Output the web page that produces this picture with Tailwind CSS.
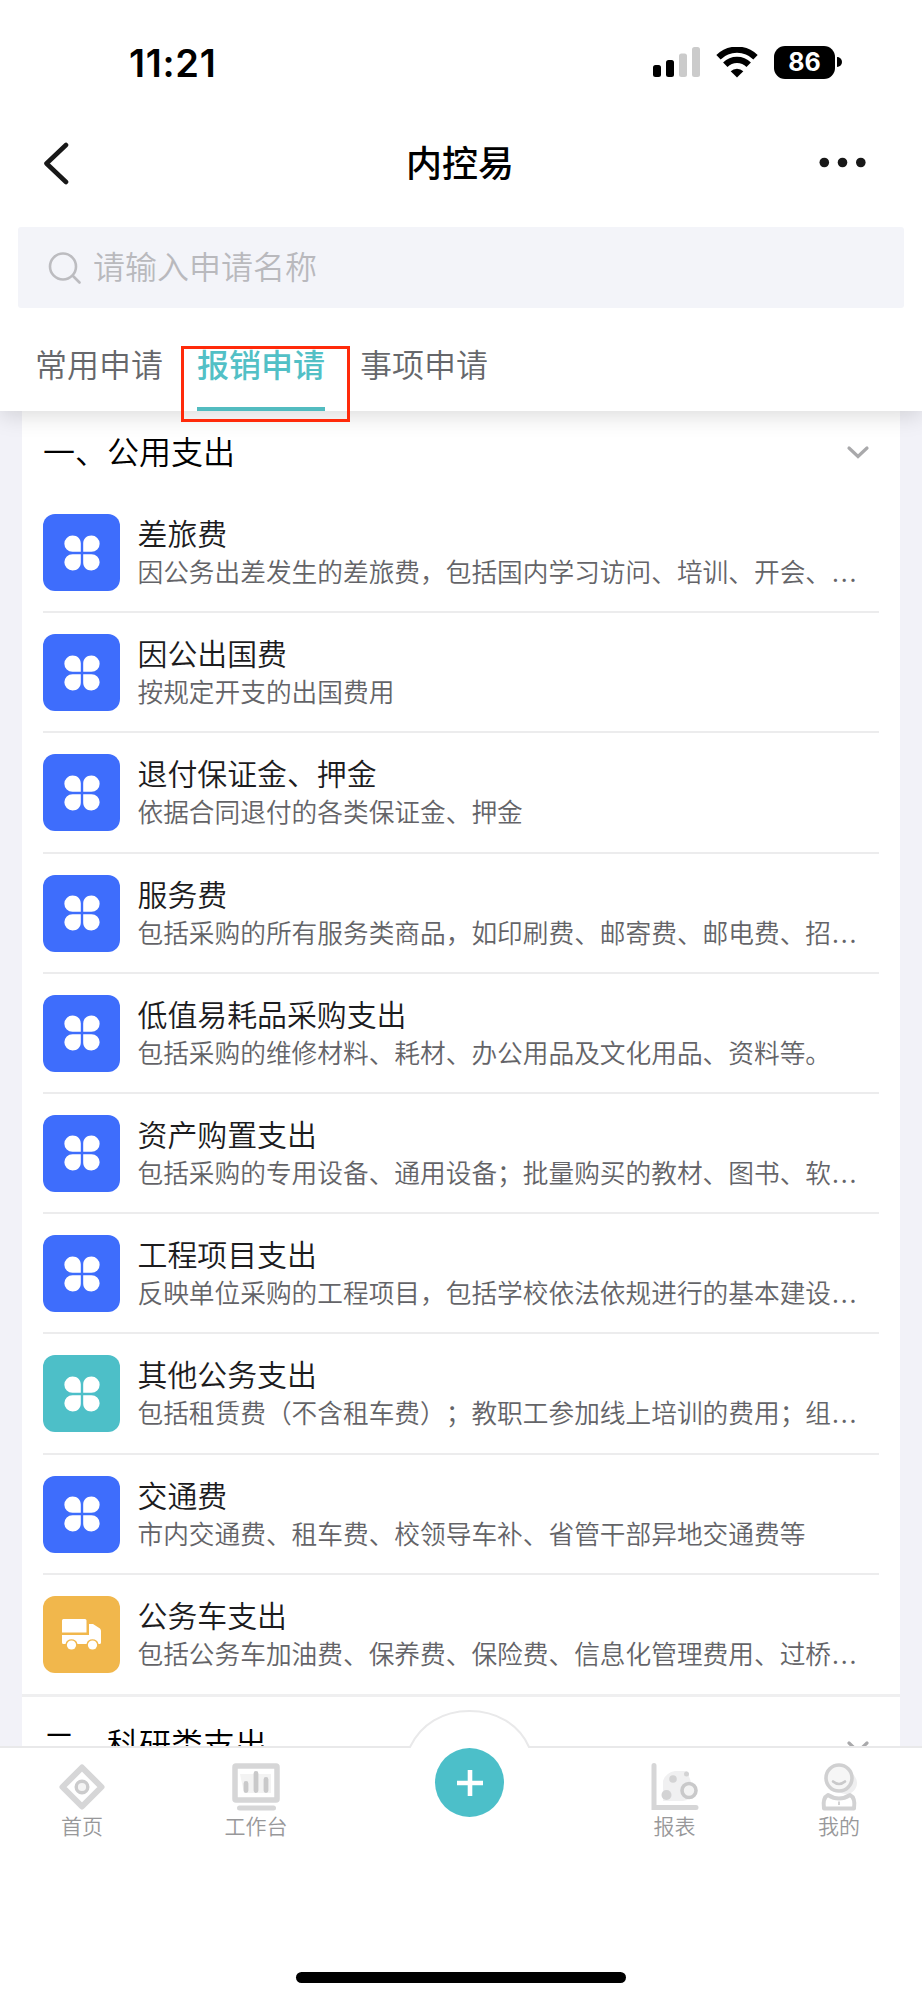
<!DOCTYPE html>
<html lang="zh-CN">
<head>
<meta charset="utf-8">
<title>内控易</title>
<script src="https://cdn.jsdelivr.net/npm/@tailwindcss/browser@4"></script>
</head>
<body class="bg-white">
<svg class="hidden">
  <symbol id="clover" viewBox="0 0 36 36">
    <path fill="#fff" d="M8.500 0.500C13.500 0.500 16.800 4 16.800 8.500V16.800H8.500A8.150 8.150 0 0 1 8.500 0.500ZM27.500 0.500A8.150 8.150 0 0 1 27.500 16.800H19.200V8.500C19.200 4 22.500 0.500 27.500 0.500ZM8.500 19.200H16.800V27.500C16.800 32 13.500 35.500 8.500 35.500A8.150 8.150 0 0 1 8.500 19.200ZM19.200 19.200H27.500A8.150 8.150 0 0 1 27.500 35.500C22.500 35.500 19.200 32 19.200 27.500Z"/>
  </symbol>
</svg>
<div class="flex h-[2000px] w-[922px] flex-col overflow-hidden bg-white font-['Noto_Sans_CJK_SC',sans-serif] font-[350] [text-spacing-trim:space-all]">
  <!-- status bar -->
  <div class="flex h-[124px] shrink-0 items-center justify-between pr-[80px] pl-[129px]">
    <span class="pt-[2px] font-['Inter',sans-serif] text-[38px] leading-none font-semibold tracking-[0.7px]">11:21</span>
    <div class="flex items-center">
      <svg class="h-[30px] w-[47px]" viewBox="0 0 47 30"><rect x="0" y="18" width="8" height="12" rx="2.500"/><rect x="13" y="13" width="8" height="17" rx="2.500"/><rect x="26" y="6.500" width="8" height="23.500" rx="2.500" fill="#cbcbcb"/><rect x="39" y="0" width="8" height="30" rx="2.500" fill="#cbcbcb"/></svg>
      <svg class="ml-[16px] h-[31px] w-[42px]" viewBox="0 0 42 31"><g fill="none" stroke="#000" stroke-width="6.200"><path d="M2.500 10.200A26.500 26.500 0 0 1 39.500 10.200"/><path d="M9.300 17.800A16.500 16.500 0 0 1 32.700 17.800"/></g><path d="M21 30.500L14.700 24.200A9 9 0 0 1 27.300 24.200Z"/></svg>
      <div class="ml-[16px] flex h-[33px] w-[61px] items-center justify-center rounded-[11px] bg-black font-['Inter',sans-serif] text-[25px] leading-none font-bold text-white">86</div>
      <svg class="ml-[2px] h-[10px] w-[5px]" viewBox="0 0 5 10"><path d="M0 0A5 5 0 0 1 0 10Z"/></svg>
    </div>
  </div>
  <!-- title bar -->
  <div class="flex h-[103px] shrink-0 items-start justify-between pr-[56px] pl-[43px]">
    <svg class="mt-[18px] h-[43px] w-[27px]" viewBox="0 0 27 43"><path d="M23 3L3.500 21.500L23 40" fill="none" stroke="#181818" stroke-width="4.600" stroke-linecap="round" stroke-linejoin="round"/></svg>
    <h1 class="mt-[14px] ml-[31px] text-[36px] leading-[46px] font-medium text-black">内控易</h1>
    <svg class="mt-[33px] h-[11px] w-[47px]" viewBox="0 0 47 11" fill="#181818"><circle cx="5.300" cy="5.500" r="4.800"/><circle cx="23.500" cy="5.500" r="4.800"/><circle cx="41.800" cy="5.500" r="4.800"/></svg>
  </div>
  <!-- search -->
  <div class="mx-[18px] flex h-[81px] shrink-0 items-center rounded-[3px] bg-[#f3f4f9] pl-[30px]">
    <svg class="h-[32px] w-[34px]" viewBox="0 0 34 32" fill="none" stroke="#bcbcc0" stroke-width="2.600" stroke-linecap="round"><circle cx="15" cy="14.500" r="13"/><path d="M25 24L31.500 30.500"/></svg>
    <span class="ml-[11px] pb-[5px] text-[32px] leading-[40px] text-[#b9b9bd]">请输入申请名称</span>
  </div>
  <!-- tabs -->
  <div class="relative z-10 flex h-[103px] shrink-0 gap-[34px] bg-white pl-[35px] text-[32px] leading-[40px] text-[#66676b] shadow-[0_4px_22px_rgba(0,0,0,0.15)] [clip-path:inset(0_0_-40px_0)]">
    <div class="pt-[35px]">常用申请</div>
    <div class="relative border-b-4 border-[#52bcc0] pt-[35px] font-medium text-[#52c0c6]">报销申请
      <div class="absolute top-[38px] -left-[16px] h-[76px] w-[169px] border-[3px] border-[#ff2a0a]"></div>
    </div>
    <div class="pt-[35px] pl-[1px]">事项申请</div>
  </div>
  <!-- list -->
  <div class="h-[1335px] shrink-0 overflow-hidden bg-[#f2f2f8] pr-[22px] pl-[22px]">
    <div class="h-[1286px] border-b-[3px] border-[#efeff0] bg-white px-[21px]">
      <div class="flex h-[82px] items-center justify-between pr-[9px]">
        <h2 class="pb-[5px] text-[32px] leading-[40px] text-black">一、公用支出</h2>
        <svg class="h-[14px] w-[24px]" viewBox="0 0 24 14"><path d="M3 3L12 11.500L21 3" fill="none" stroke="#a9a9ab" stroke-width="3.200" stroke-linecap="round"/></svg>
      </div>
      <div id="rows"></div>
    </div>
    <div class="flex h-[92px] items-center justify-between bg-white pr-[30px] pl-[21px]">
      <h2 class="pb-[3px] text-[32px] leading-[40px] text-black">二、科研类支出</h2>
      <svg class="mt-[8px] h-[14px] w-[24px]" viewBox="0 0 24 14"><path d="M3 3L12 11.500L21 3" fill="none" stroke="#a9a9ab" stroke-width="3.200" stroke-linecap="round"/></svg>
    </div>
  </div>
  <!-- tab bar -->
  <div class="relative h-[254px] shrink-0 border-t-2 border-[#e9e9ea] bg-white text-[21px] leading-[26px] text-[#98989a]">
    <svg class="absolute -top-[39px] left-[406px] h-[42px] w-[128px]" viewBox="0 0 128 42"><path d="M0 38H4C15 15 37 2 63.500 2S113 15 123 38H128V42H0Z" fill="#fff"/><path d="M0 38H4C15 15 37 2 63.500 2S113 15 123 38H128" fill="none" stroke="#e9e9ea" stroke-width="2"/></svg>
    <div class="relative flex pt-[15px]">
      <div class="flex w-[164px] flex-col items-center">
        <svg class="h-[48px] w-[48px]" viewBox="0 0 48 48" fill="none" stroke="#d6d6d7"><path d="M24 4.500L43.500 24L24 43.500L4.500 24Z" stroke-width="6" stroke-linejoin="round"/><circle cx="24" cy="24" r="5.800" stroke="#cbcbcc" stroke-width="3.400" fill="#f4f4f4"/></svg>
        <span class="mt-px">首页</span>
      </div>
      <div class="flex w-[184px] flex-col items-center">
        <svg class="h-[48px] w-[48px]" viewBox="0 0 48 48"><rect x="3" y="3" width="42" height="34" rx="1" fill="#fff" stroke="#d6d6d7" stroke-width="5.500"/><path d="M8 11H39V30H12Z" fill="#f3f3f3"/><g stroke="#c9c9ca" stroke-width="4.800" stroke-linecap="round"><path d="M14 20.500V27.500M24 10.500V27.500M34 16.500V27.500"/></g><rect x="5" y="42.500" width="39" height="5" rx="2.500" fill="#d6d6d7"/></svg>
        <span class="mt-px">工作台</span>
      </div>
      <div class="flex w-[243px] justify-center">
        <div class="-mt-[15px] flex h-[69px] w-[69px] items-center justify-center rounded-full bg-[#4cbfc9]">
          <svg class="h-[26px] w-[26px]" viewBox="0 0 26 26"><path d="M13 0V26M0 13H26" stroke="#fff" stroke-width="4.600"/></svg>
        </div>
      </div>
      <div class="flex w-[167px] flex-col items-center">
        <svg class="h-[48px] w-[48px]" viewBox="0 0 48 48"><path d="M3 2.500V44.500H45" fill="none" stroke="#d6d6d7" stroke-width="5" stroke-linecap="round"/><path d="M12 38V18A15 15 0 0 1 24 8H36L43 27A12 12 0 0 1 32 38Z" fill="#f0f0f1"/><circle cx="22" cy="16" r="3.800" fill="#d3d3d4"/><circle cx="35.500" cy="11" r="2.500" fill="#d3d3d4"/><circle cx="15.500" cy="32" r="5" fill="#d3d3d4"/><circle cx="38" cy="27.500" r="7" fill="#f3f3f3" stroke="#c9c9ca" stroke-width="3.600"/></svg>
        <span class="mt-px">报表</span>
      </div>
      <div class="flex w-[162px] flex-col items-center">
        <svg class="h-[48px] w-[48px]" viewBox="0 0 48 48"><circle cx="31" cy="20" r="11" fill="#efeff0"/><circle cx="24" cy="15" r="13" fill="#f6f6f6" stroke="#d0d0d1" stroke-width="3.600"/><path d="M18 18.500Q24 23.500 30 18.500" fill="none" stroke="#c9c9ca" stroke-width="2.600" stroke-linecap="round"/><path d="M9 45.500C8 39 9 34 13 32Q24 39 35 32C39 34 40 39 39 45.500Z" fill="#fff" stroke="#d2d2d3" stroke-width="4" stroke-linejoin="round"/><path d="M24 38.500V42" stroke="#d2d2d3" stroke-width="2"/></svg>
        <span class="mt-px">我的</span>
      </div>
    </div>
    <div class="absolute bottom-[17px] left-[296px] h-[11px] w-[330px] rounded-full bg-black"></div>
  </div>
</div>
<script>
const clover = '<svg class="h-[36px] w-[36px]"><use href="#clover"/></svg>';
const truck = '<svg class="h-[31px] w-[39px]" viewBox="0 0 39 31"><path fill="#fff" d="M1.500 0H23Q24.500 0 24.500 1.500V13.500H0V1.500Q0 0 1.500 0ZM27 5H31L38 9.500Q39 10.500 39 12V23.500Q39 25 37.500 25H36.500A6.200 6.200 0 0 0 24.500 25H15.500A6.200 6.200 0 0 0 3.500 25H1.500Q0 25 0 23.500V16H27Z"/><circle cx="9.500" cy="26" r="4.600" fill="#fff"/><circle cx="30.500" cy="26" r="4.600" fill="#fff"/></svg>';
const dots = '<span class="ml-[1px] font-[\'Noto_Sans\',sans-serif] tracking-[1.8px]">...</span>';
const blue = 'bg-[#3e6dfc]', teal = 'bg-[#4dbfc8]', amber = 'bg-[#f1b74c]';
const data = [
  ['差旅费', '因公务出差发生的差旅费，包括国内学习访问、培训、开会、' + dots, blue, clover],
  ['因公出国费', '按规定开支的出国费用', blue, clover],
  ['退付保证金、押金', '依据合同退付的各类保证金、押金', blue, clover],
  ['服务费', '包括采购的所有服务类商品，如印刷费、邮寄费、邮电费、招' + dots, blue, clover],
  ['低值易耗品采购支出', '包括采购的维修材料、耗材、办公用品及文化用品、资料等。', blue, clover],
  ['资产购置支出', '包括采购的专用设备、通用设备；批量购买的教材、图书、软' + dots, blue, clover],
  ['工程项目支出', '反映单位采购的工程项目，包括学校依法依规进行的基本建设' + dots, blue, clover],
  ['其他公务支出', '包括租赁费（不含租车费）；教职工参加线上培训的费用；组' + dots, teal, clover],
  ['交通费', '市内交通费、租车费、校领导车补、省管干部异地交通费等', blue, clover],
  ['公务车支出', '包括公务车加油费、保养费、保险费、信息化管理费用、过桥' + dots, amber, truck]
];
document.getElementById('rows').innerHTML = data.map(([t, d, c, icon], i) => `
  <div class="flex h-[120.2px] items-start pt-[21px] ${i < 9 ? 'border-b-2 border-[#ececed]' : ''}">
    <div class="flex h-[77px] w-[77px] shrink-0 items-center justify-center rounded-[12px] ${c}">${icon}</div>
    <div class="ml-[17.5px] min-w-0">
      <div class="-mt-px text-[29.9px] leading-[39px] text-[#1c1c1e]">${t}</div>
      <div class="text-[25.7px] leading-[38px] whitespace-nowrap text-[#646468]">${d}</div>
    </div>
  </div>`).join('');
</script>
</body>
</html>
